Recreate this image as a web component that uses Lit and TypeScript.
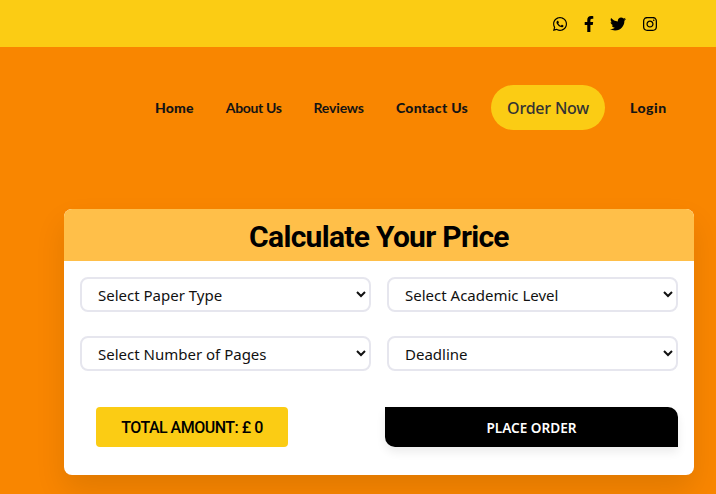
import { LitElement, html, css, svg } from 'lit';
import { customElement } from 'lit/decorators.js';

const icons = [
  { label: 'WhatsApp', box: '0 0 448 512', d: 'M380.9 97.1C339 55.1 283.2 32 223.9 32c-122.4 0-222 99.6-222 222 0 39.1 10.2 77.3 29.6 111L0 480l117.7-30.9c32.4 17.7 68.9 27 106.1 27h.1c122.3 0 224.1-99.6 224.1-222 0-59.3-25.2-115-67.1-157zm-157 341.6c-33.2 0-65.7-8.9-94-25.7l-6.7-4-69.8 18.3L72 359.2l-4.4-7c-18.5-29.4-28.2-63.3-28.2-98.2 0-101.7 82.8-184.5 184.6-184.5 49.3 0 95.6 19.2 130.4 54.1 34.8 34.9 56.2 81.2 56.1 130.5 0 101.8-84.9 184.6-186.6 184.6zm101.2-138.2c-5.5-2.8-32.8-16.2-37.9-18-5.1-1.9-8.8-2.8-12.5 2.8-3.7 5.6-14.3 18-17.6 21.8-3.2 3.7-6.5 4.2-12 1.4-32.6-16.3-54-29.1-75.5-66-5.7-9.8 5.7-9.1 16.3-30.3 1.8-3.7.9-6.9-.5-9.7-1.4-2.8-12.5-30.1-17.1-41.2-4.5-10.8-9.1-9.3-12.5-9.5-3.2-.2-6.9-.2-10.6-.2-3.7 0-9.7 1.4-14.8 6.9-5.1 5.6-19.4 19-19.4 46.3 0 27.3 19.9 53.7 22.6 57.4 2.8 3.7 39.1 59.7 94.8 83.8 35.2 15.2 49 16.5 66.6 13.9 10.7-1.6 32.8-13.4 37.4-26.4 4.6-13 4.6-24.1 3.2-26.4-1.3-2.5-5-3.9-10.5-6.6z' },
  { label: 'Facebook', box: '0 0 320 512', d: 'M279.14 288l14.22-92.66h-88.91v-60.13c0-25.35 12.42-50.06 52.24-50.06h40.42V6.26S260.43 0 225.36 0c-73.22 0-121.08 44.38-121.08 124.72v70.62H22.89V288h81.39v224h100.17V288z' },
  { label: 'Twitter', box: '0 0 512 512', d: 'M459.37 151.716c.325 4.548.325 9.097.325 13.645 0 138.72-105.583 298.558-298.558 298.558-59.452 0-114.68-17.219-161.137-47.106 8.447.974 16.568 1.299 25.34 1.299 49.055 0 94.213-16.568 130.274-44.832-46.132-.975-84.792-31.188-98.112-72.772 6.498.974 12.995 1.624 19.818 1.624 9.421 0 18.843-1.3 27.614-3.573-48.081-9.747-84.143-51.98-84.143-102.985v-1.299c13.969 7.797 30.214 12.67 47.431 13.319-28.264-18.843-46.781-51.005-46.781-87.391 0-19.492 5.197-37.36 14.294-52.954 51.655 63.675 129.3 105.258 216.365 109.807-1.624-7.797-2.599-15.918-2.599-24.04 0-57.828 46.782-104.934 104.934-104.934 30.213 0 57.502 12.67 76.67 33.137 23.715-4.548 46.456-13.32 66.599-25.34-7.798 24.366-24.366 44.833-46.132 57.827 21.117-2.273 41.584-8.122 60.426-16.243-14.292 20.791-32.161 39.308-52.628 54.253z' },
  { label: 'Instagram', box: '0 0 448 512', d: 'M224.1 141c-63.6 0-114.9 51.3-114.9 114.9s51.3 114.9 114.9 114.9S339 319.5 339 255.9 287.7 141 224.1 141zm0 189.6c-41.1 0-74.7-33.5-74.7-74.7s33.5-74.7 74.7-74.7 74.7 33.5 74.7 74.7-33.6 74.7-74.7 74.7zm146.4-194.3c0 14.9-12 26.8-26.8 26.8-14.9 0-26.8-12-26.8-26.8s12-26.8 26.8-26.8 26.8 12 26.8 26.8zm76.1 27.2c-1.7-35.9-9.9-67.7-36.2-93.9-26.2-26.2-58-34.4-93.9-36.2-37-2.1-147.9-2.1-184.9 0-35.8 1.7-67.6 9.9-93.9 36.1s-34.4 58-36.2 93.9c-2.1 37-2.1 147.9 0 184.9 1.7 35.9 9.9 67.7 36.2 93.9s58 34.4 93.9 36.2c37 2.1 147.9 2.1 184.9 0 35.9-1.7 67.7-9.9 93.9-36.2 26.2-26.2 34.4-58 36.2-93.9 2.1-37 2.1-147.8 0-184.8zM398.8 388c-7.8 19.6-22.9 34.7-42.6 42.6-29.5 11.7-99.5 9-132.1 9s-102.7 2.6-132.1-9c-19.6-7.8-34.7-22.9-42.6-42.6-11.7-29.5-9-99.5-9-132.1s-2.6-102.7 9-132.1c7.8-19.6 22.9-34.7 42.6-42.6 29.5-11.7 99.5-9 132.1-9s102.7-2.6 132.1 9c19.6 7.8 34.7 22.9 42.6 42.6 11.7 29.5 9 99.5 9 132.1s2.7 102.7-9 132.1z' },
];

const navLinks = [
  { text: 'Home', cls: 'heavy' },
  { text: 'About Us', cls: 'light' },
  { text: 'Reviews', cls: 'light reviews' },
  { text: 'Contact Us', cls: 'heavy contact' },
];

const selects = [
  'Select Paper Type',
  'Select Academic Level',
  'Select Number of Pages',
  'Deadline',
];

@customElement('app-root')
export class AppRoot extends LitElement {
  static styles = css`
    :host {
      display: block;
      height: 494px;
      overflow: hidden;
      background: #f98600;
      font-family: 'Noto Sans', sans-serif;
    }

    .topbar {
      height: 47px;
      background: #fbcc14;
      display: flex;
      align-items: center;
      gap: 16.5px;
      padding-left: 553px;
      box-sizing: border-box;
    }

    .topbar a {
      display: flex;
      color: #000;
    }

    .topbar svg {
      height: 16px;
      fill: currentColor;
    }

    .nav {
      display: flex;
      align-items: center;
      height: 45px;
      margin-top: 38px;
      padding-left: 155px;
      font-family: 'Lato', sans-serif;
      font-size: 14px;
      color: #141414;
    }

    .nav a {
      margin-right: 32px;
      white-space: nowrap;
    }

    .nav a.heavy {
      font-weight: 900;
      letter-spacing: 0.2px;
    }

    .nav a.light {
      font-weight: 700;
      letter-spacing: -0.35px;
    }

    .nav a.reviews {
      letter-spacing: -0.15px;
    }

    .nav a.contact {
      margin-right: 23px;
      letter-spacing: 0.3px;
    }

    .nav a.pill {
      width: 114px;
      height: 45px;
      margin-right: 25px;
      border-radius: 23px;
      background: #fbcc14;
      color: #333;
      display: flex;
      align-items: center;
      justify-content: center;
      font-family: 'Noto Sans', sans-serif;
      font-size: 16px;
      font-weight: 500;
      letter-spacing: -0.2px;
    }

    .nav a.login {
      margin-right: 0;
      letter-spacing: 0.5px;
    }

    .card {
      width: 630px;
      height: 266px;
      margin: 79px 0 0 64px;
      background: #fff;
      border-radius: 8px;
      box-shadow: 0 15px 30px rgba(0, 0, 0, 0.1);
      overflow: hidden;
    }

    .card h2 {
      margin: 0;
      height: 52px;
      padding-top: 2px;
      box-sizing: border-box;
      background: #ffbf49;
      color: #000;
      display: flex;
      align-items: center;
      justify-content: center;
      font-family: 'Roboto', sans-serif;
      font-size: 30px;
      font-weight: 700;
      letter-spacing: -0.7px;
    }

    .fields {
      display: grid;
      grid-template-columns: 291px 291px;
      column-gap: 16px;
      row-gap: 24px;
      padding: 16px 16px 0;
    }

    select {
      height: 35px;
      width: 100%;
      padding: 0 12px;
      background: #fff;
      border: 2px solid #e6e6ee;
      border-radius: 8px;
      color: #111;
      font-family: 'Noto Sans', sans-serif;
      font-size: 15px;
      outline: none;
    }

    .actions {
      display: flex;
      align-items: center;
      margin-top: 36px;
      padding-left: 32px;
    }

    .total {
      width: 192px;
      height: 40px;
      border-radius: 4px;
      background: #fbcc14;
      color: #000;
      display: flex;
      align-items: center;
      justify-content: center;
      font-family: 'Roboto', sans-serif;
      font-size: 16px;
      font-weight: 500;
      letter-spacing: -0.5px;
    }

    .place {
      width: 293px;
      height: 40px;
      margin-left: 97px;
      border: 0;
      border-radius: 0 10px 0 10px;
      background: #000;
      color: #fff;
      box-shadow: 0 5px 10px rgba(0, 0, 0, 0.08);
      font-family: 'Noto Sans', sans-serif;
      font-size: 13.6px;
      font-weight: 600;
    }
  `;

  render() {
    return html`
      <div class="topbar">
        ${icons.map(
          (i) => html`<a aria-label=${i.label}>
            <svg viewBox=${i.box}>${svg`<path d=${i.d}></path>`}</svg>
          </a>`
        )}
      </div>
      <nav class="nav">
        ${navLinks.map((l) => html`<a class=${l.cls}>${l.text}</a>`)}
        <a class="pill">Order Now</a>
        <a class="heavy login">Login</a>
      </nav>
      <section class="card">
        <h2>Calculate Your Price</h2>
        <div class="fields">
          ${selects.map((s) => html`<select><option>${s}</option></select>`)}
        </div>
        <div class="actions">
          <div class="total">TOTAL AMOUNT: £ 0</div>
          <button class="place">PLACE ORDER</button>
        </div>
      </section>
    `;
  }
}
